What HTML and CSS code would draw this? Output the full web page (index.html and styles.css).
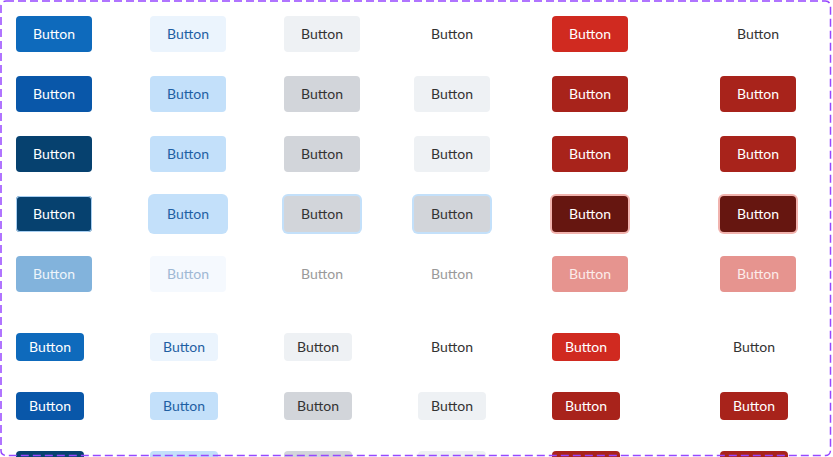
FILE: index.html
```html
<!DOCTYPE html>
<html lang="en">
<head>
    <meta charset="UTF-8">
    <title>Button variants</title>
    <link rel="stylesheet" href="styles.css">
</head>
<body>
    <div class="frame">
        <!-- large buttons -->
        <div class="set set-lg">
            <div class="row">
                <div class="cell"><button class="btn primary">Button</button></div>
                <div class="cell"><button class="btn secondary">Button</button></div>
                <div class="cell"><button class="btn tertiary">Button</button></div>
                <div class="cell center"><button class="btn ghost">Button</button></div>
                <div class="cell"><button class="btn danger">Button</button></div>
                <div class="cell"><button class="btn danger-ghost">Button</button></div>
            </div>
            <div class="row">
                <div class="cell"><button class="btn primary hover">Button</button></div>
                <div class="cell"><button class="btn secondary hover">Button</button></div>
                <div class="cell"><button class="btn tertiary hover">Button</button></div>
                <div class="cell center"><button class="btn ghost hover">Button</button></div>
                <div class="cell"><button class="btn danger hover">Button</button></div>
                <div class="cell"><button class="btn danger-ghost hover">Button</button></div>
            </div>
            <div class="row">
                <div class="cell"><button class="btn primary pressed">Button</button></div>
                <div class="cell"><button class="btn secondary pressed">Button</button></div>
                <div class="cell"><button class="btn tertiary pressed">Button</button></div>
                <div class="cell center"><button class="btn ghost pressed">Button</button></div>
                <div class="cell"><button class="btn danger pressed">Button</button></div>
                <div class="cell"><button class="btn danger-ghost pressed">Button</button></div>
            </div>
            <div class="row">
                <div class="cell"><button class="btn primary focus">Button</button></div>
                <div class="cell"><button class="btn secondary focus">Button</button></div>
                <div class="cell"><button class="btn tertiary focus">Button</button></div>
                <div class="cell center"><button class="btn ghost focus">Button</button></div>
                <div class="cell"><button class="btn danger focus">Button</button></div>
                <div class="cell"><button class="btn danger-ghost focus">Button</button></div>
            </div>
            <div class="row">
                <div class="cell"><button class="btn primary disabled">Button</button></div>
                <div class="cell"><button class="btn secondary disabled">Button</button></div>
                <div class="cell"><button class="btn tertiary disabled">Button</button></div>
                <div class="cell center"><button class="btn ghost disabled">Button</button></div>
                <div class="cell"><button class="btn danger disabled">Button</button></div>
                <div class="cell"><button class="btn danger-ghost disabled">Button</button></div>
            </div>
        </div>

        <!-- small buttons -->
        <div class="set set-sm">
            <div class="row">
                <div class="cell"><button class="btn primary">Button</button></div>
                <div class="cell"><button class="btn secondary">Button</button></div>
                <div class="cell"><button class="btn tertiary">Button</button></div>
                <div class="cell center"><button class="btn ghost">Button</button></div>
                <div class="cell"><button class="btn danger">Button</button></div>
                <div class="cell"><button class="btn danger-ghost">Button</button></div>
            </div>
            <div class="row">
                <div class="cell"><button class="btn primary hover">Button</button></div>
                <div class="cell"><button class="btn secondary hover">Button</button></div>
                <div class="cell"><button class="btn tertiary hover">Button</button></div>
                <div class="cell center"><button class="btn ghost hover">Button</button></div>
                <div class="cell"><button class="btn danger hover">Button</button></div>
                <div class="cell"><button class="btn danger-ghost hover">Button</button></div>
            </div>
            <div class="row">
                <div class="cell"><button class="btn primary pressed">Button</button></div>
                <div class="cell"><button class="btn secondary pressed">Button</button></div>
                <div class="cell"><button class="btn tertiary pressed">Button</button></div>
                <div class="cell center"><button class="btn ghost pressed">Button</button></div>
                <div class="cell"><button class="btn danger pressed">Button</button></div>
                <div class="cell"><button class="btn danger-ghost pressed">Button</button></div>
            </div>
        </div>

        <!-- dashed frame outline -->
        <svg class="frame-border" width="833" height="457" viewBox="0 0 833 457">
            <rect x="1" y="1" width="829.5" height="454.5" rx="5" ry="5"
                  fill="none" stroke="#9747ff" stroke-width="1.5" stroke-dasharray="8 4"/>
        </svg>
    </div>
</body>
</html>
```

FILE: styles.css
```css
/* page */
html, body {
    margin: 0;
    padding: 0;
    height: 100%;
    overflow: hidden;
}

body {
    background-color: #fff;
    font-family: Lato, "Noto Sans", Arial, sans-serif;
}

.frame {
    position: relative;
    width: 833px;
    height: 457px;
    overflow: hidden;
    box-sizing: border-box;
    padding: 16px 0 0 16px;
}

.frame-border {
    position: absolute;
    top: 0;
    left: 0;
    pointer-events: none;
}

/* rows and columns */
.set {
    display: flex;
    flex-direction: column;
}

.set-lg { gap: 24px; }

.set-sm {
    gap: 31px;
    margin-top: 41px;
}

.row {
    display: grid;
    grid-template-columns: 134px 134px 130px 138px 168px 1fr;
    align-items: center;
}

.cell {
    display: flex;
}

.cell.center {
    width: 76px;
    justify-content: center;
}

/* button base */
.btn {
    box-sizing: border-box;
    width: 76px;
    height: 36px;
    padding: 0;
    border: none;
    border-radius: 4px;
    font-family: inherit;
    font-size: 14px;
    line-height: 1;
    background: transparent;
    color: #333;
    cursor: pointer;
}

.set-sm .btn {
    width: 68px;
    height: 28px;
}

/* primary */
.btn.primary { background-color: #0e6abc; color: #fff; }
.btn.primary.hover { background-color: #0957a9; }
.btn.primary.pressed { background-color: #06416f; }
.btn.primary.focus {
    background-color: #06416f;
    box-shadow: inset 0 0 0 1px #a8cff2;
}
.btn.primary.disabled { background-color: #82b3dc; color: #eef5fb; }

/* secondary */
.btn.secondary { background-color: #ebf4fd; color: #1f5fa3; }
.btn.secondary.hover,
.btn.secondary.pressed { background-color: #c3e0fa; }
.btn.secondary.focus {
    background-color: #c3e0fa;
    box-shadow: 0 0 0 2px #c3e0fa;
}
.btn.secondary.disabled { background-color: #f5f9fe; color: #9fb8d4; }

/* tertiary */
.btn.tertiary { background-color: #eef1f4; }
.btn.tertiary.hover,
.btn.tertiary.pressed { background-color: #d2d5da; }
.btn.tertiary.focus {
    background-color: #d2d5da;
    box-shadow: 0 0 0 2px #c3e0fa;
}
.btn.tertiary.disabled { background-color: transparent; color: #9a9a9a; }

/* ghost */
.btn.ghost.hover,
.btn.ghost.pressed { background-color: #eef1f4; }
.btn.ghost.focus {
    background-color: #d2d5da;
    box-shadow: 0 0 0 2px #c3e0fa;
}
.btn.ghost.disabled { color: #9a9a9a; }

/* danger */
.btn.danger { background-color: #d02a20; color: #fff; }
.btn.danger.hover,
.btn.danger.pressed,
.btn.danger-ghost.hover,
.btn.danger-ghost.pressed { background-color: #a8231b; color: #fff; }
.btn.danger.focus,
.btn.danger-ghost.focus {
    background-color: #661610;
    color: #fff;
    box-shadow: 0 0 0 2px #f1b3ae;
}
.btn.danger.disabled,
.btn.danger-ghost.disabled { background-color: #e6948f; color: #fcecea; }
```
